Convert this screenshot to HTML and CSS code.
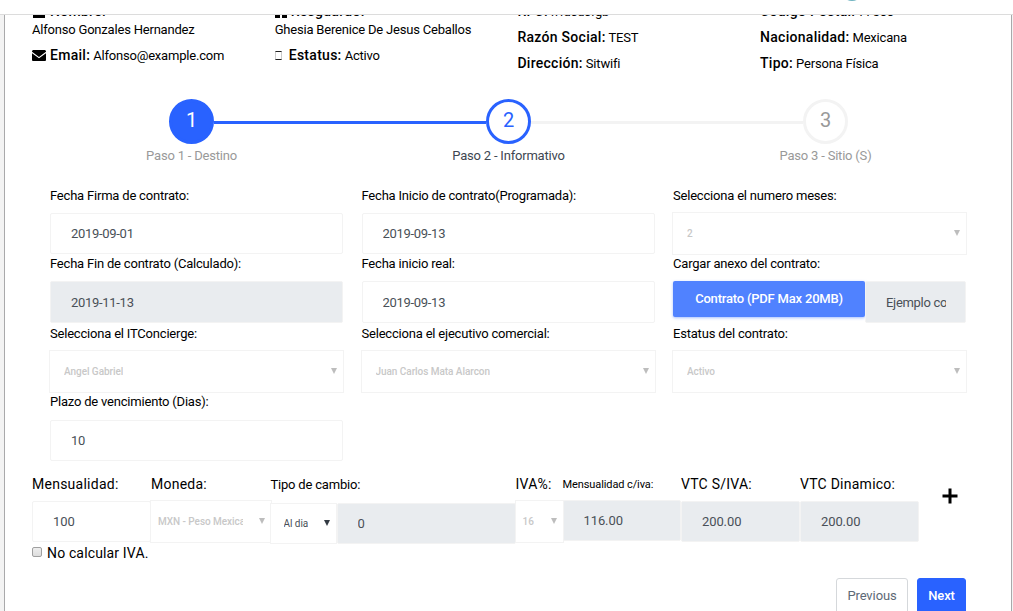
FILE: index.html
```html
<!DOCTYPE html>
<html lang="es">
<head>
<meta charset="utf-8">
<title>Contrato</title>
<link rel="stylesheet" href="styles.css">
</head>
<body>
<header class="topbar"><span class="topbar-logo"></span></header>
<main class="panel">
  <section class="info">
    <div class="info-col">
      <p class="stacked"><svg class="ico" viewBox="0 0 14 14"><circle cx="7" cy="4" r="3.5"/><path d="M1 8h12v6H1z"/></svg><b>Nombre:</b><span class="value">Alfonso Gonzales Hernandez</span></p>
      <p><svg class="ico" viewBox="0 0 14 14"><path d="M1 2h12l1 1v.7L7 9 0 3.700V3zM0 5.200l7 5.100 7-5.100V12.300l-.7.700H.7L0 12.300z"/></svg><b>Email:</b> Alfonso@example.com</p>
    </div>
    <div class="info-col">
      <p class="stacked"><svg class="ico ico-build" viewBox="0 0 12 14"><path d="M0 0h12v14H7v-3H5v3H0z"/></svg><b>Resguardo:</b><span class="value">Ghesia Berenice De Jesus Ceballos</span></p>
      <p><i class="missing"></i><b>Estatus:</b> Activo</p>
    </div>
    <div class="info-col">
      <p><b>RFC:</b> rrfdsdsfgb</p>
      <p><b>Razón Social:</b> TEST</p>
      <p><b>Dirección:</b> Sitwifi</p>
    </div>
    <div class="info-col">
      <p><b>Código Postal:</b> 77500</p>
      <p><b>Nacionalidad:</b> Mexicana</p>
      <p><b>Tipo:</b> Persona Física</p>
    </div>
  </section>

  <ol class="steps">
    <li class="step done"><span class="dot">1</span><span class="step-name">Paso 1 - Destino</span></li>
    <li class="step current"><span class="dot">2</span><span class="step-name">Paso 2 - Informativo</span></li>
    <li class="step"><span class="dot">3</span><span class="step-name">Paso 3 - Sitio (S)</span></li>
  </ol>

  <section class="form">
    <div class="field"><label>Fecha Firma de contrato:</label><input class="input" value="2019-09-01"></div>
    <div class="field"><label>Fecha Inicio de contrato(Programada):</label><input class="input" value="2019-09-13"></div>
    <div class="field"><label>Selecciona el numero meses:</label><div class="select"><span>2</span><i class="arrow"></i></div></div>

    <div class="field"><label>Fecha Fin de contrato (Calculado):</label><input class="input tall readonly" value="2019-11-13" readonly></div>
    <div class="field"><label>Fecha inicio real:</label><input class="input tall" value="2019-09-13"></div>
    <div class="field"><label>Cargar anexo del contrato:</label>
      <div class="upload"><button class="upload-btn">Contrato (PDF Max 20MB)</button><input class="input tall readonly" value="Ejemplo contrato.pdf" readonly></div>
    </div>

    <div class="field"><label>Selecciona el ITConcierge:</label><div class="select"><span>Angel Gabriel</span><i class="arrow"></i></div></div>
    <div class="field"><label>Selecciona el ejecutivo comercial:</label><div class="select"><span>Juan Carlos Mata Alarcon</span><i class="arrow"></i></div></div>
    <div class="field"><label>Estatus del contrato:</label><div class="select"><span>Activo</span><i class="arrow"></i></div></div>

    <div class="field last"><label>Plazo de vencimiento (Dias):</label><input class="input" value="10"></div>
  </section>

  <section class="amounts">
    <div class="amount w-month"><label>Mensualidad:</label><input class="input" value="100"></div>
    <div class="amount w-currency"><label>Moneda:</label><div class="select compact"><span>MXN - Peso Mexicano</span><i class="arrow"></i></div></div>
    <div class="amount w-rate"><label class="small">Tipo de cambio:</label>
      <div class="rate"><div class="select active"><span>Al dia</span><i class="arrow"></i></div><input class="input readonly" value="0" readonly></div>
    </div>
    <div class="amount w-tax"><label>IVA%:</label><div class="select compact"><span>16</span><i class="arrow"></i></div></div>
    <div class="amount w-taxed"><label class="tiny">Mensualidad c/iva:</label><input class="input readonly" value="116.00" readonly></div>
    <div class="amount w-vtc"><label>VTC S/IVA:</label><input class="input readonly" value="200.00" readonly></div>
    <div class="amount w-vtc"><label>VTC Dinamico:</label><input class="input readonly" value="200.00" readonly></div>
    <svg class="plus" viewBox="0 0 16 16"><path d="M6.500.500h3v6h6v3h-6v6h-3v-6h-6v-3h6z"/></svg>
  </section>

  <div class="check"><i class="box"></i><span>No calcular IVA.</span></div>

  <footer class="actions"><button class="btn">Previous</button><button class="btn primary">Next</button></footer>
</main>
</body>
</html>
```
FILE: styles.css
```css
* { box-sizing: border-box; }
html, body { height: 611px; overflow: hidden; }
body {
  margin: 0;
  background: #f3f3f3;
  color: #000;
  font: 13px/18px Roboto, sans-serif;
  letter-spacing: -.2px;
  display: flex;
  flex-direction: column;
}
input, button { font: inherit; letter-spacing: inherit; margin: 0; }
b { font-weight: 500; font-size: 14px; letter-spacing: .28px; }

.topbar { height: 15px; flex: none; background: #fff; border-bottom: 1px solid #dcdcdc; overflow: hidden; }
.topbar-logo { display: block; width: 22px; height: 22px; margin: -21.500px 0 0 841px; border-radius: 50%; background: #6fb3c0; }

.panel {
  flex: 1;
  min-height: 0;
  overflow: hidden;
  margin: 0 1px 0 4px;
  border: solid #a9a9ab;
  border-width: 0 1px;
  background: #fff;
}

.info { display: flex; height: 86px; margin: -17px 0 0 27px; }
.info-col { width: 242.700px; flex: none; }
.info-col p { margin: 0; line-height: 26px; height: 26px; white-space: nowrap; }
.info-col .stacked { height: 44px; }
.value { display: block; line-height: 10px; }
.ico { width: 14px; height: 14px; margin-right: 4px; vertical-align: -2px; }
.ico-build { width: 12px; }
.missing { display: inline-block; width: 7px; height: 9px; margin: 0 7px 0 0; border: 1px solid #222; border-left-color: #ccc; border-right-color: #ccc; }

.steps { display: flex; list-style: none; margin: 15px 0 0 28px; padding: 0; height: 88px; }
.step { width: 317px; display: flex; flex-wrap: wrap; align-content: flex-start; color: #999; }
.step::before, .step::after { content: ""; width: 136px; height: 3px; margin-top: 22px; background: #f3f3f3; }
.step:first-child::before, .step:last-child::after { background: none; }
.step.done::after, .step.current::before { background: #2962ff; }
.dot { width: 45px; height: 45px; border: 3px solid #f3f3f3; border-radius: 50%; text-align: center; font-size: 20px; line-height: 37px; letter-spacing: 0; }
.done .dot { background: #2962ff; border-color: #2962ff; color: #fff; }
.current .dot { border-color: #2962ff; color: #2962ff; }
.step-name { order: 2; width: 317px; text-align: center; line-height: 24px; }
.current .step-name { color: #3e4651; }

.form {
  display: grid;
  grid-template-columns: repeat(3, 293px);
  grid-template-rows: 68px 70px 68px 82px;
  column-gap: 18.500px;
  margin-left: 45px;
}
.field label { display: block; height: 17px; line-height: 17px; margin-bottom: 9px; white-space: nowrap; }
.field .select { margin: -1px -1px 0; }
.field.last label { margin-bottom: 10px; }

.input {
  display: block;
  width: 100%;
  height: 41px;
  padding: 0 20px;
  border: 1px solid #f3f3f3;
  border-radius: 2px;
  background: #fff;
  color: #495057;
  letter-spacing: -.3px;
  outline: 0;
}
.input.tall { height: 42px; }
.input.readonly { background: #e9ecef; }
.amounts .input { letter-spacing: -.1px; }

.select {
  height: 43px;
  border: 1px solid #f3f3f3;
  background: #fff;
  color: #c8c8c8;
  display: flex;
  align-items: center;
  justify-content: space-between;
  padding: 0 6px 0 14px;
  font-size: 10px;
  font-weight: 500;
  letter-spacing: -.05px;
  white-space: nowrap;
}
.select span { overflow: hidden; }
.arrow { flex: none; border: solid transparent; border-width: 6px 3.500px 0; border-top-color: #bdbdbd; margin-top: -2px; }

.upload { display: flex; align-items: flex-start; }
.upload-btn { width: 192px; height: 36px; flex: none; border: 0; border-radius: 2px; padding: 0; background: #5082ff; color: #fff; font-weight: 500; box-shadow: 0 1px 3px rgba(80, 130, 255, .5); }
.upload .input { flex: 1; min-width: 0; padding-right: 19px; }

.amounts { display: flex; margin-left: 27px; height: 71px; }
.amount { flex: none; }
.amount label { display: block; height: 18px; line-height: 19px; margin-bottom: 8px; font-size: 14px; letter-spacing: .25px; white-space: nowrap; }
.amount label.small { font-size: 13px; line-height: 20px; letter-spacing: -.2px; }
.amount label.tiny { font-size: 11px; line-height: 20px; letter-spacing: -.1px; }
.w-month, .w-vtc { width: 119px; }
.w-currency { width: 119.500px; }
.w-rate { width: 245px; }
.w-tax { width: 47px; }
.w-taxed { width: 118.500px; }
.w-taxed .input { margin-top: -1px; }
.compact { margin: -1px -1px 0; padding-left: 7px; }
.w-currency span { width: 85px; }
.rate { display: flex; margin-top: 10px; }
.rate .select { width: 67px; height: 41px; margin-left: -1px; color: #495057; font-weight: 400; padding-left: 13px; }
.rate .arrow { border-top-color: #333b43; }
.rate .input { flex: 1; min-width: 0; }
.plus { width: 16px; height: 16px; margin: 13px 0 0 23px; }

.check { display: flex; align-items: center; height: 18px; margin: -2px 0 0 27px; font-size: 14px; letter-spacing: .15px; }
.box { width: 10px; height: 10px; margin: -2px 5px 0 0; border: 1px solid #a0a0a0; border-radius: 2px; background: linear-gradient(#eee, #ddd); }

.actions { display: flex; justify-content: flex-end; gap: 9px; margin: 16px 45px 0 0; }
.btn { width: 72px; height: 36px; padding: 0; border: 1px solid #d5d8db; border-radius: 3px; background: #fff; color: #5d6976; letter-spacing: -.1px; }
.btn.primary { width: 49px; border-color: #2962ff; background: #2962ff; color: #fff; font-weight: 500; }
```
